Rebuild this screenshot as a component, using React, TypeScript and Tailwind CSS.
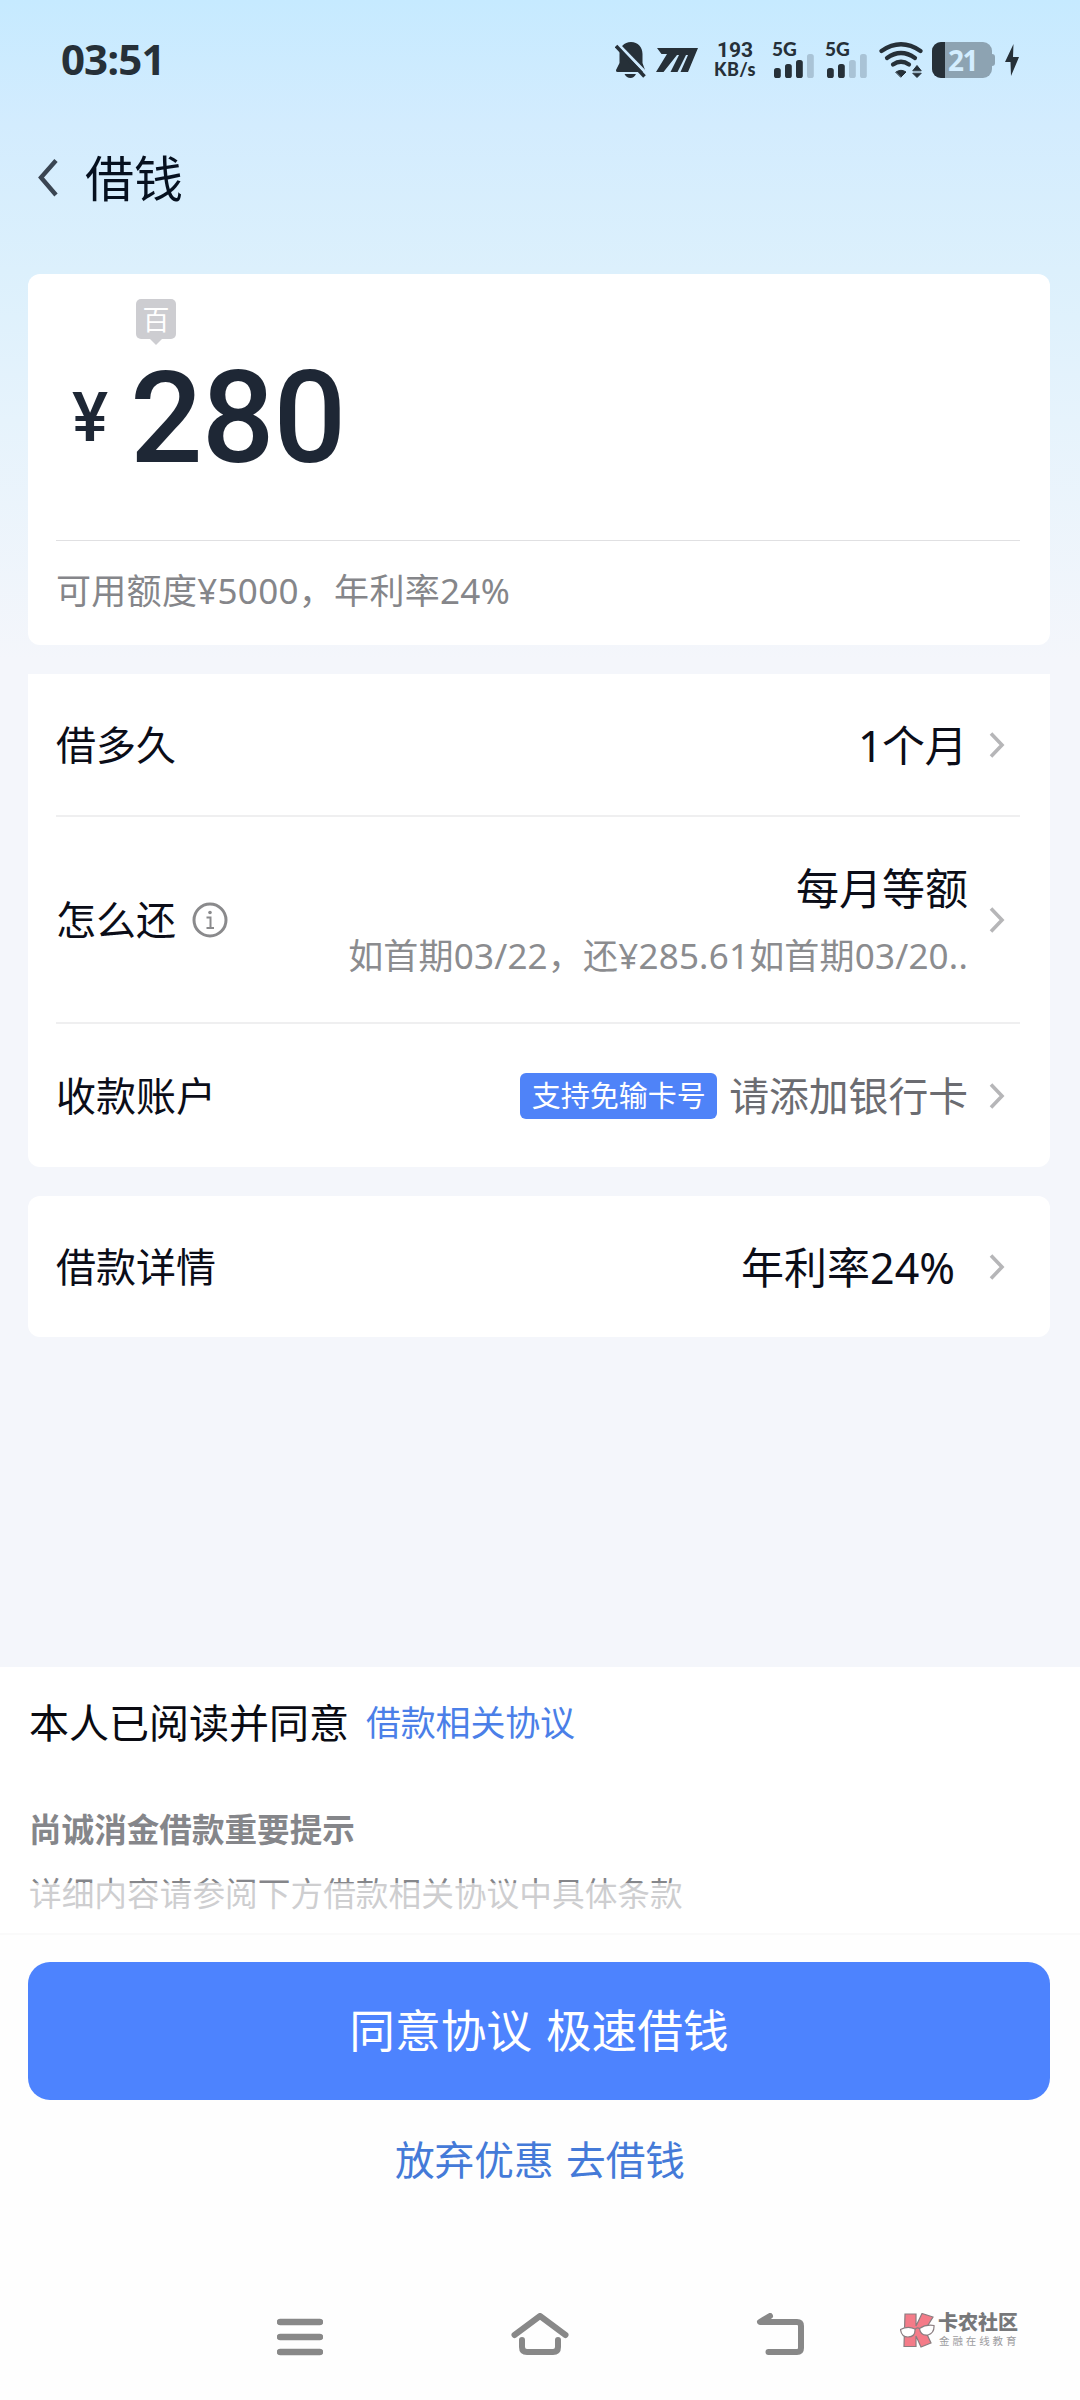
import React from "react";

// latin digits from Noto Sans, everything else falls through to the CJK face
const FONT = "font-['Noto_Sans','Noto_Sans_CJK_SC',sans-serif]";

function Chevron() {
  return (
    <svg width="16" height="28" viewBox="0 0 16 28" className="shrink-0" fill="none" stroke="#b6b6b8" strokeWidth="3.600">
      <path d="M2 2.500 L13 14 L2 25.500" />
    </svg>
  );
}

function SignalBars({ level }: { level: number }) {
  const heights = [10, 14, 18, 24];
  return (
    <svg width="40" height="24" viewBox="0 0 40 24">
      {heights.map((h, i) => (
        <rect key={h} x={i * 11} y={24 - h} width="6.800" height={h} rx="2.600" fill={i < level ? "#263038" : "#a9c3d6"} />
      ))}
    </svg>
  );
}

function Signal({ level }: { level: number }) {
  return (
    <div className="relative h-9 w-10">
      <span className="absolute -left-[2px] top-0 text-[19px] leading-[14px] font-black font-[Lato,sans-serif]">5G</span>
      <div className="absolute bottom-0 left-0 flex">
        <SignalBars level={level} />
      </div>
    </div>
  );
}

function StatusBar() {
  return (
    <div className="flex h-[118px] items-center pl-[61px] pt-[2px] text-[#263038] font-['Open_Sans',sans-serif]">
      <span className="w-[554px] pb-[2px] text-[42px] leading-none font-bold tracking-[-0.900px]">03:51</span>
      <div className="flex h-9 items-center">
        <svg width="32" height="36" viewBox="0 0 32 36" fill="#263038">
          <path d="M16 0 C9 0 4.500 5 4.500 12 V21 L1 28 Q0.500 30 2.500 30 H29 Q31 30 30 28 L27.500 21 V12 C27.500 5 23 0 16 0 Z" />
          <path d="M9.500 32 H21 Q19 36 15.500 36 Q11.500 36 9.500 32 Z" />
          <path d="M3 2 L33 33" stroke="#ceeafe" strokeWidth="3" />
          <path d="M1 4 L29.500 34.500" stroke="#263038" strokeWidth="3.600" />
        </svg>
        <svg width="42" height="24" viewBox="0 0 42 24" className="ml-[9px]" fill="#263038">
          <path d="M1 0 H42 L32 24 H24.500 L32 7 H30 L21.500 24 H14.500 L23 7 H21 L7.500 24 H0 L11 6 H5.500 Z" />
        </svg>
        <div className="ml-[15px] flex h-9 w-11 flex-col items-center font-bold">
          <span className="-mt-[2px] text-[21px] leading-[20px] font-[Roboto,sans-serif]">193</span>
          <span className="text-[18px] leading-[18px] tracking-[0.400px] font-black font-[Lato,sans-serif]">KB/s</span>
        </div>
        <div className="ml-[17px]">
          <Signal level={3} />
        </div>
        <div className="ml-[13px]">
          <Signal level={2} />
        </div>
        <svg width="44" height="36" viewBox="0 0 44 36" className="ml-[12px]" fill="none" stroke="#263038" strokeWidth="4.200" strokeLinecap="round">
          <path d="M2.500 9 Q22 -4.500 41.500 9" />
          <path d="M8 16 Q22 6 36 16" />
          <path d="M14 22.500 Q22 17 30 22.500" />
          <path d="M17 30 Q22 26.500 27 30 L22 35 Z" fill="#263038" strokeWidth="1" />
          <path d="M34 28.500 L38 23.500 L42 28.500 Z M34 31.500 L38 35.500 L42 31.500 Z" fill="#263038" strokeWidth="1" />
        </svg>
        <div className="ml-[9px] flex items-center">
          <div className="flex h-9 w-[60px] items-center rounded-[9px] bg-[#8da3b2]">
            <div className="h-full w-[13px] rounded-l-[9px] bg-[#263038]" />
            <span className="ml-[3px] text-[28px] leading-none font-bold tracking-[-1.500px] text-[#d3edff]">21</span>
          </div>
          <div className="h-3 w-[3px] rounded-r-sm bg-[#8da3b2]" />
        </div>
        <svg width="14" height="32" viewBox="0 0 14 32" className="ml-[10px]" fill="#263038">
          <path d="M8.500 0 L0 18 H5.500 L6 32 L14 13 H8 Z" />
        </svg>
      </div>
    </div>
  );
}

function TitleBar() {
  return (
    <div className="flex h-[120px] items-center pl-[38px]">
      <svg width="20" height="38" viewBox="0 0 20 38" fill="none" stroke="#3a4552" strokeWidth="4.400">
        <path d="M18 1.500 L3 18.500 L18 36" />
      </svg>
      <h1 className="ml-[27px] text-[49px] leading-none text-[#06101f]">借钱</h1>
    </div>
  );
}

function AmountCard() {
  return (
    <section className="mx-[28px] mt-[36px] h-[371px] w-[1022px] rounded-[12px] bg-white pl-7 pr-[30px]">
      <div className="relative h-[267px] border-b border-[#e0e0e2] font-[Roboto,sans-serif] font-medium text-[#1e2735]">
        <div className="absolute left-[80px] top-[25px] flex size-10 items-center justify-center rounded-[5px] bg-[#cdcdd1]">
          <span className="pb-[2px] text-[27px] leading-none font-normal text-white font-['Noto_Sans_CJK_SC',sans-serif]">百</span>
          <svg width="12" height="6" viewBox="0 0 12 6" className="absolute left-[14px] top-[40px]" fill="#cdcdd1">
            <path d="M0 0 H12 L6 6 Z" />
          </svg>
        </div>
        <div className="flex pt-[80px]">
          <span className="ml-[16px] mt-[24px] w-[58px] text-[68px] leading-[80px]">¥</span>
          <span className="mt-[2px] text-[128px] leading-[124px] tracking-[-1px]">280</span>
        </div>
      </div>
      <p className="flex h-[101px] items-center text-[35px] tracking-[0.300px] text-[#85868a]">可用额度¥5000，年利率24%</p>
    </section>
  );
}

function DetailRow({ label, className, children }: { label: React.ReactNode; className: string; children: React.ReactNode }) {
  return (
    <div className={`flex items-center justify-between pr-[15px] ${className}`}>
      <div className="flex items-center text-[40px] leading-none text-[#0b0d18]">{label}</div>
      <div className="flex items-center">
        {children}
        <Chevron />
      </div>
    </div>
  );
}

function InfoIcon() {
  return (
    <svg width="36" height="36" viewBox="0 0 36 36" className="ml-[16px]" fill="none" stroke="#8a8a8c">
      <circle cx="18" cy="18" r="16" strokeWidth="3" />
      <path d="M14.500 15.500 H18.500 V26 M14.500 26 H22" strokeWidth="2" />
      <circle cx="18" cy="10.500" r="1.800" fill="#8a8a8c" stroke="none" />
    </svg>
  );
}

function LoanCard() {
  return (
    <section className="mx-[28px] mt-[29px] h-[493px] w-[1022px] rounded-b-[12px] bg-white pl-7 pr-[30px]">
      <DetailRow label="借多久" className="h-[143px] border-b-2 border-[#efeff0]">
        <span className="mr-[22px] pt-[2px] text-[43px] leading-none tracking-[-0.500px] text-[#0b0d18]">1个月</span>
      </DetailRow>
      <DetailRow
        label={
          <>
            怎么还
            <InfoIcon />
          </>
        }
        className="h-[207px] border-b-2 border-[#efeff0]"
      >
        <div className="mr-[21px] flex flex-col items-end pt-[5px]">
          <span className="text-[43px] leading-[66px] text-[#0b0d18]">每月等额</span>
          <span className="text-[35px] leading-[67px] tracking-[0.200px] text-[#8b8c8f]">如首期03/22，还¥285.61如首期03/20..</span>
        </div>
      </DetailRow>
      <DetailRow label="收款账户" className="h-[143px]">
        <span className="mr-[12px] flex h-[46px] w-[197px] items-center justify-center rounded-[6px] bg-[#4f83f8] text-[29px] leading-none text-white">
          支持免输卡号
        </span>
        <span className="mr-[21px] text-[39.800px] leading-none text-[#6b6c71]">请添加银行卡</span>
      </DetailRow>
    </section>
  );
}

function RateCard() {
  return (
    <section className="mx-[28px] mt-[29px] h-[141px] w-[1022px] rounded-[12px] bg-white pl-7 pr-[30px]">
      <DetailRow label="借款详情" className="h-full">
        <span className="mr-[34px] pt-px text-[43px] leading-none text-[#0b0d18]">年利率24%</span>
      </DetailRow>
    </section>
  );
}

function Agreement() {
  return (
    <section className="h-[268px] shrink-0 border-b-2 border-[#fafafa] bg-white pl-[29px]">
      <p className="flex h-[112px] items-center text-[40px] text-[#0a0b12]">
        本人已阅读并同意
        <a className="ml-[17px] text-[35px] tracking-[-0.200px] text-[#4b7fe8]">借款相关协议</a>
      </p>
      <p className="mt-[19px] text-[32.600px] leading-[64px] font-bold text-[#85868a]">尚诚消金借款重要提示</p>
      <div className="relative text-[32.700px] leading-[64px] text-[#85868a]">
        详细内容请参阅下方借款相关协议中具体条款
        {/* fades the terms out above the action area */}
        <div className="absolute inset-x-0 bottom-0 top-[21px] bg-white/60" />
      </div>
    </section>
  );
}

function Actions() {
  return (
    <div className="flex h-[337px] shrink-0 flex-col items-center pt-[27px]">
      <button className="ml-[-2px] h-[138px] w-[1022px] rounded-[22px] bg-[#4d83fe] pb-[2px] text-[45.700px] [word-spacing:2px] text-white">
        同意协议 极速借钱
      </button>
      <a className="mt-[30px] text-[39.700px] leading-[60px] [word-spacing:2px] text-[#447ad8]">放弃优惠 去借钱</a>
    </div>
  );
}

function Watermark() {
  return (
    <div className="flex items-center">
      <svg width="35" height="36" viewBox="0 0 35 36" stroke="#8a7d80" strokeWidth="1.200">
        <path d="M5 1 H16 V13 L22 0.500 L33 4 L25 17 L31 30 L21 34 L16 23 V33.500 H4 Z" fill="#f47b88" />
        <path d="M0.500 16.500 Q8 12.500 15 16 Q15.500 24 8 24 Q1.500 24 0.500 16.500 Z" fill="#fff" />
        <path d="M19.500 15.500 Q26 11 34 12.500 Q34.500 20 28 22 Q20.500 23 19.500 15.500 Z" fill="#fff" />
        <path d="M15 16.500 Q17 14 19.500 15.500" fill="none" />
      </svg>
      <div className="ml-[3px] flex flex-col">
        <span className="text-[20px] leading-[20px] font-black text-[#77787a]">卡农社区</span>
        <span className="ml-[1px] text-[10.500px] leading-[16px] tracking-[2.900px] text-[#9c9c9e]">金融在线教育</span>
      </div>
    </div>
  );
}

function NavBar() {
  return (
    <nav className="flex h-[128px] shrink-0 items-center pl-[277px]">
      <svg width="46" height="46" viewBox="0 0 46 46" stroke="#888" strokeWidth="6.500" strokeLinecap="round">
        <path d="M3 9 H43 M3 24 H43 M3 39 H43" />
      </svg>
      <svg width="58" height="46" viewBox="0 0 58 46" className="ml-[188px]" fill="none" stroke="#888" strokeWidth="6" strokeLinecap="round" strokeLinejoin="round">
        <path d="M3.500 22 L29 3 L54.500 22" />
        <path d="M11 27 V34 Q11 39 16 39 H42 Q47 39 47 34 V27" />
      </svg>
      <svg width="50" height="46" viewBox="0 0 50 46" className="ml-[187px]" fill="none" stroke="#888" strokeWidth="6" strokeLinecap="round" strokeLinejoin="round">
        <path d="M14 3 L4 9 H41 Q45 9 45 13 V35 Q45 39 41 39 H12.500" />
      </svg>
      <div className="-mt-[11px] ml-[94px]">
        <Watermark />
      </div>
    </nav>
  );
}

export default function App() {
  return (
    <div className={`flex h-[2400px] w-[1080px] flex-col bg-[#fefefe] ${FONT}`}>
      <div className="h-[1667px] shrink-0 bg-[#f4f6fb] bg-[linear-gradient(180deg,#c6eaff_0px,#d3ecfe_125px,#dcf0fc_270px,#e6f3fc_420px,#f4f6fb_660px)]">
        <StatusBar />
        <TitleBar />
        <AmountCard />
        <LoanCard />
        <RateCard />
      </div>
      <Agreement />
      <Actions />
      <NavBar />
    </div>
  );
}
